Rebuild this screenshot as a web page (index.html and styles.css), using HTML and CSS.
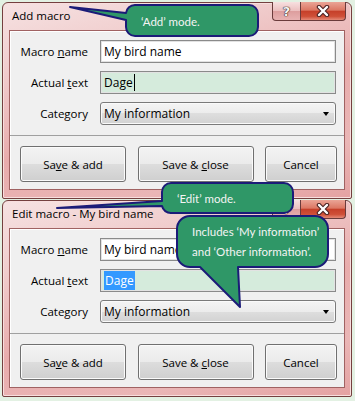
FILE: index.html
```html
<!DOCTYPE html>
<html lang="en">
<head>
  <meta charset="UTF-8">
  <title>Macro dialogs</title>
  <link rel="stylesheet" href="styles.css">
</head>
<body>

<div class="stage">

  <div class="window">
    <div class="titlebar">
      <span class="title">Add macro</span>
      <div class="caption">
        <span class="cap-btn help">?</span>
        <span class="cap-btn close">
          <svg width="14" height="12" viewBox="0 0 14 12">
            <path d="M3 2 L11 10 M11 2 L3 10" stroke="#4a2222" stroke-width="4.5" stroke-linecap="round"/>
            <path d="M3 2 L11 10 M11 2 L3 10" stroke="#ffffff" stroke-width="2.4" stroke-linecap="round"/>
          </svg>
        </span>
      </div>
    </div>
    <div class="client">
      <div class="fields">
        <label>Macro <u>n</u>ame</label>
        <div class="textbox">My bird name</div>
        <label>Actual <u>t</u>ext</label>
        <div class="textbox green">Dage<span class="caret"></span></div>
        <label>Category</label>
        <div class="combo">My information<span class="arrow"></span></div>
      </div>
      <div class="buttons">
        <button class="btn btn-add">Sa<u>v</u>e &amp; add</button>
        <button class="btn btn-close">Save &amp; <u>c</u>lose</button>
        <button class="btn btn-cancel">Cancel</button>
      </div>
    </div>
  </div>

  <div class="window">
    <div class="titlebar">
      <span class="title">Edit macro - My bird name</span>
      <div class="caption">
        <span class="cap-btn help">?</span>
        <span class="cap-btn close">
          <svg width="14" height="12" viewBox="0 0 14 12">
            <path d="M3 2 L11 10 M11 2 L3 10" stroke="#4a2222" stroke-width="4.5" stroke-linecap="round"/>
            <path d="M3 2 L11 10 M11 2 L3 10" stroke="#ffffff" stroke-width="2.4" stroke-linecap="round"/>
          </svg>
        </span>
      </div>
    </div>
    <div class="client">
      <div class="fields">
        <label>Macro <u>n</u>ame</label>
        <div class="textbox">My bird name</div>
        <label>Actual <u>t</u>ext</label>
        <div class="textbox green"><span class="selected">Dage</span></div>
        <label>Category</label>
        <div class="combo">My information<span class="arrow"></span></div>
      </div>
      <div class="buttons">
        <button class="btn btn-add">Sa<u>v</u>e &amp; add</button>
        <button class="btn btn-close">Save &amp; <u>c</u>lose</button>
        <button class="btn btn-cancel">Cancel</button>
      </div>
    </div>
  </div>

  <!-- callouts drawn over both dialogs -->
  <svg class="callouts" width="355" height="401" viewBox="0 0 355 401">
    <path class="bubble" d="M135 5 H249 A9 9 0 0 1 258 14 V27 A9 9 0 0 1 249 36 H135 A9 9 0 0 1 126 27 V20 L70 7 L126 13 A9 9 0 0 1 135 5 Z"/>
    <text class="note" x="141" y="26">‘Add’ mode.</text>

    <path class="bubble" d="M171 183 H284 A9 9 0 0 1 293 192 V204 A9 9 0 0 1 284 213 H171 A9 9 0 0 1 162 206 L57 208 L162 201 V192 A9 9 0 0 1 171 183 Z"/>
    <text class="note" x="177" y="203">‘Edit’ mode.</text>

    <path class="bubble" d="M190 216 H315 A13 13 0 0 1 328 229 V254 A13 13 0 0 1 315 267 H238 L240 307 L200 267 H190 A13 13 0 0 1 177 254 V229 A13 13 0 0 1 190 216 Z"/>
    <text class="note" x="192" y="236">Includes ‘My information’</text>
    <text class="note" x="192" y="256">and ‘Other information’.</text>
  </svg>

</div>

</body>
</html>
```

FILE: styles.css
```css
body { margin: 0; background: #e3f1e3; font-family: "Open Sans", "Noto Sans", sans-serif; font-size: 11.5px; color: #000; }
.stage { position: relative; width: 355px; height: 401px; box-sizing: border-box; padding: 2px 0 0 2px; display: flex; flex-direction: column; gap: 1px; }

.window { width: 350px; height: 197px; box-sizing: border-box; border: 1px solid #74403f; border-radius: 6px 6px 2px 2px; padding: 0 6px 8px 6px; display: flex; flex-direction: column;
  background: linear-gradient(165deg, #f6e2e2 0%, #f0cccc 25%, #e8acac 55%, #eab6b6 80%, #e4a2a2 100%);
  box-shadow: inset 0 0 0 1px #f8dede; }
.titlebar { height: 27px; display: flex; align-items: flex-start; }
.title { margin: 5px 0 0 3px; font-size: 11.5px; }
.caption { margin-left: auto; margin-right: -1px; margin-top: -1px; display: flex; }
.cap-btn { height: 19px; box-sizing: border-box; border: 1px solid #6a3b3b; border-top: none; display: flex; align-items: center; justify-content: center; }
.help { width: 28px; border-radius: 0 0 0 4px; border-right: none; color: #f4f4f4; font-weight: bold; font-size: 13px; font-family: "DejaVu Sans", sans-serif; text-shadow: 0 0 1px #3a2020, 0 0 1px #3a2020, 0 0 1px #3a2020;
  background: linear-gradient(#f7e0e0, #ecc0c0 48%, #dd9e9e 52%, #e8b2b2); }
.close { width: 46px; border-radius: 0 0 4px 0;
  background: linear-gradient(#eaa496, #dc7864 45%, #c6402a 52%, #cf5038 80%, #e48a78); }

.client { flex: 1; background: #f0f0f0; border: 1px solid #a06262; box-shadow: inset 1px 1px 0 #ffffff; display: flex; flex-direction: column; }
.fields { display: grid; grid-template-columns: 68px 236px; grid-auto-rows: 23px; column-gap: 12px; row-gap: 8px; padding: 9px 0 10px 10px; align-items: center; }
.fields label { text-align: right; }
.textbox { height: 23px; box-sizing: border-box; border: 1px solid #8a8a8a; box-shadow: inset 0 0 0 1px #e2e2e2; background: #fff; padding: 0 3px; display: flex; align-items: center; font-size: 12px; }
.textbox.green { background: #d5ebdc; }
.caret { display: inline-block; width: 1px; height: 17px; background: #000; margin-left: 1px; }
.selected { background: #3399ff; color: #fff; padding: 1px 1px; }
.combo { height: 23px; box-sizing: border-box; border: 1px solid #7a7a7a; border-radius: 3px; padding: 0 6px 0 3px; display: flex; align-items: center; font-size: 12px;
  background: linear-gradient(#f4f4f4, #ececec 50%, #dedede 50%, #d2d2d2); box-shadow: inset 0 0 0 1px #fafafa; }
.arrow { margin-left: auto; width: 0; height: 0; border-left: 3.5px solid transparent; border-right: 3.5px solid transparent; border-top: 4px solid #000; }

.buttons { flex: 1; border-top: 1px solid #a0a0a0; display: flex; justify-content: space-between; align-items: flex-start; padding: 10px 7px 0 10px; }
.btn { height: 36px; margin: 0; padding: 0; font-family: inherit; font-size: 11.5px; color: #000; border: 1px solid #707070; border-radius: 3px;
  background: linear-gradient(#f3f3f3, #ebebeb 50%, #dddddd 50%, #cfcfcf); box-shadow: inset 0 0 0 1px #fbfbfb; }
.btn-add { width: 106px; }
.btn-close { width: 116px; }
.btn-cancel { width: 72px; }

.callouts { position: absolute; left: 0; top: 0; pointer-events: none; }
.bubble { fill: #2f9767; stroke: #1b1b78; stroke-width: 2; stroke-linejoin: round; }
.note { fill: #f4f4f4; font-family: Lato, "Open Sans", sans-serif; font-size: 11.5px; }
```
